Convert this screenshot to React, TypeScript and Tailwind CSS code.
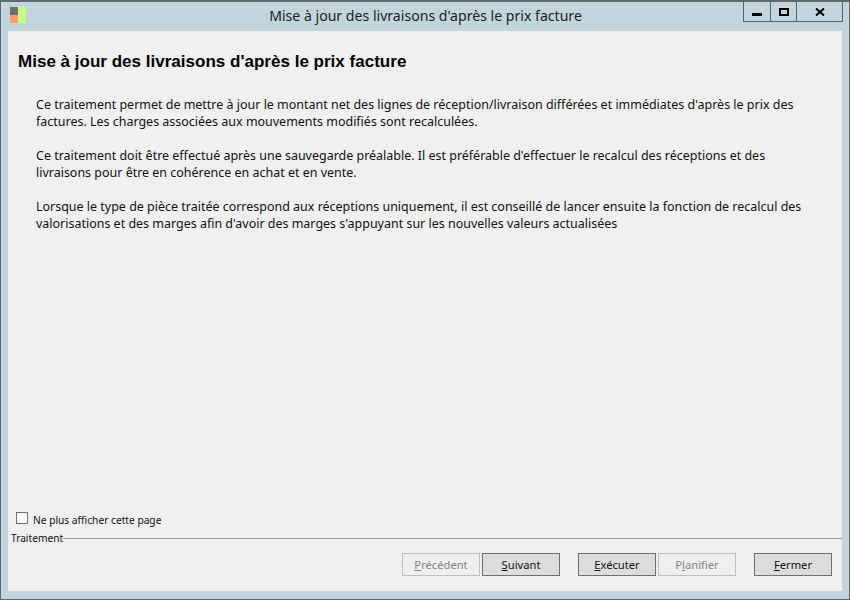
const bodyFont = "font-['Noto_Sans','Open_Sans',sans-serif]";

function WizardButton({ mnemonic, before = "", after, disabled = false }: { mnemonic: string; before?: string; after: string; disabled?: boolean }) {
  return (
    <button
      className={
        disabled
          ? "w-[78px] h-[23px] border border-[#bfbfbf] bg-[#efefef] text-[11.2px] leading-[21px] text-[#838383]"
          : "w-[78px] h-[23px] border border-[#707070] bg-[#dddddd] text-[11.2px] leading-[21px] text-[#111]"
      }
    >
      {before}
      <span className="underline">{mnemonic}</span>
      {after}
    </button>
  );
}

export default function App() {
  return (
    <div className={`w-[850px] h-[600px] flex flex-col bg-[#c3d5dc] border border-[#5f6a70] border-t-2 ${bodyFont}`}>
      {/* barre de titre */}
      <div className="h-[29px] shrink-0 grid grid-cols-[1fr_auto_1fr] pl-[9px] pr-[6px]">
        <div className="pt-[5px]">
          <svg width="16" height="16" viewBox="0 0 16 16">
            <rect x="0" y="0" width="8" height="8" fill="#6f6f6f" />
            <rect x="0" y="8" width="8" height="8" fill="#ff9c63" />
            <rect x="8" y="0" width="8" height="16" fill="#c6fb84" />
          </svg>
        </div>
        <div className="pt-[4px] pr-[2px] text-[14.1px] leading-[20px] text-[#1c1c1c]">Mise à jour des livraisons d'après le prix facture</div>
        <div className="flex justify-end">
          <div className="h-[20px] flex border border-t-0 border-[#56636a]">
            <div className="w-[27px] flex items-end justify-center pb-[5px] border-r border-[#56636a]">
              <div className="w-[10px] h-[3px] bg-black" />
            </div>
            <div className="w-[26px] flex items-center justify-center border-r border-[#56636a]">
              <div className="w-[10px] h-[8px] border-2 border-black" />
            </div>
            <div className="w-[45px] flex items-center justify-center">
              <svg width="10" height="8" viewBox="0 0 10 8">
                <path d="M1 0.5 L9 7.5 M9 0.5 L1 7.5" stroke="#000" strokeWidth="2" fill="none" />
              </svg>
            </div>
          </div>
        </div>
      </div>

      {/* contenu */}
      <div className="mx-[7px] h-[560px] bg-[#f0f0f0] flex flex-col">
        <h1 className="pt-[20px] pl-[10px] text-[17.05px] leading-[22px] font-bold text-black font-['Liberation_Sans',sans-serif]">
          Mise à jour des livraisons d'après le prix facture
        </h1>
        <div className="flex-1 pt-[23px] pl-[28px] text-[12.47px] leading-[17px] text-[#111] flex flex-col gap-[17px]">
          <p>
            Ce traitement permet de mettre à jour le montant net des lignes de réception/livraison différées et immédiates d'après le prix des<br />
            factures. Les charges associées aux mouvements modifiés sont recalculées.
          </p>
          <p>
            Ce traitement doit être effectué après une sauvegarde préalable. Il est préférable d'effectuer le recalcul des réceptions et des<br />
            livraisons pour être en cohérence en achat et en vente.
          </p>
          <p>
            Lorsque le type de pièce traitée correspond aux réceptions uniquement, il est conseillé de lancer ensuite la fonction de recalcul des<br />
            valorisations et des marges afin d'avoir des marges s'appuyant sur les nouvelles valeurs actualisées
          </p>
        </div>
        <label className="flex items-start gap-[5px] pl-[8px] pt-[1px] h-[16px] text-[10.2px] leading-[14px] text-[#111]">
          <span className="w-[12px] h-[12px] border border-[#707070] bg-white" />
          <span className="pt-[1px]">Ne plus afficher cette page</span>
        </label>
        <div className="mt-[4px] flex items-center h-[14px]">
          <span className="pl-[3px] text-[10.2px] leading-[14px] text-[#111]">Traitement</span>
          <div className="flex-1 h-px bg-[#a0a0a0]" />
        </div>
        <div className="h-[46px] pt-[8px] pr-[10px] flex justify-end">
          <WizardButton mnemonic="P" after="récédent" disabled />
          <div className="w-[2px]" />
          <WizardButton mnemonic="S" after="uivant" />
          <div className="w-[18px]" />
          <WizardButton mnemonic="E" after="xécuter" />
          <div className="w-[2px]" />
          <WizardButton before="P" mnemonic="l" after="anifier" disabled />
          <div className="w-[18px]" />
          <WizardButton mnemonic="F" after="ermer" />
        </div>
      </div>
    </div>
  );
}
